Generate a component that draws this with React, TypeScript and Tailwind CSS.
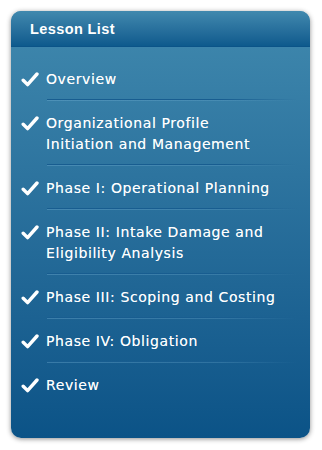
import React from "react";

const items: string[][] = [
  ["Overview"],
  ["Organizational Profile", "Initiation and Management"],
  ["Phase I: Operational Planning"],
  ["Phase II: Intake Damage and", "Eligibility Analysis"],
  ["Phase III: Scoping and Costing"],
  ["Phase IV: Obligation"],
  ["Review"],
];

function Check() {
  return (
    <svg width="18" height="15" viewBox="0 0 18 15" className="shrink-0 mt-[3px]">
      <path
        d="M2.2 8.2 L6.6 12.6 L16 2"
        fill="none"
        stroke="white"
        strokeWidth="3.4"
        strokeLinecap="round"
        strokeLinejoin="round"
      />
    </svg>
  );
}

export default function App() {
  return (
    <div className="w-[322px] h-[450px] bg-white pt-[11px] pl-[11px]">
      <div
        className="w-[299px] h-[427px] rounded-[10px] overflow-hidden shadow-[0_1px_5px_rgba(0,0,0,0.45)] bg-gradient-to-b from-[#4089ae] to-[#0b5387] flex flex-col"
        style={{ fontFamily: '"DejaVu Sans", Verdana, sans-serif' }}
      >
        <div className="h-[36px] shrink-0 bg-gradient-to-b from-[#4189ae] to-[#0d5a8d] flex items-center pl-[19px] pt-[2px] border-b border-[#0b5488]">
          <span
            className="text-white font-bold tracking-[0.4px]"
            style={{ fontFamily: '"Liberation Sans", Arial, sans-serif', fontSize: "14.5px" }}
          >
            Lesson List
          </span>
        </div>
        <div className="flex flex-col pt-[10px]">
          {items.map((lines, i) => (
            <div key={i} className="flex flex-col">
              <div className="flex items-start gap-[7px] pl-[10px] pt-[12px] pb-[9px]">
                <Check />
                <div className="text-white text-[14px] leading-[21px] tracking-[0.6px] [text-shadow:0_0_0.5px_rgba(255,255,255,0.6)]">
                  {lines.map((l, j) => (
                    <div key={j}>{l}</div>
                  ))}
                </div>
              </div>
              {i < items.length - 1 && (
                <div className="ml-[36px] w-[250px] flex flex-col">
                  <div className="h-px bg-gradient-to-r from-[#185d90] via-[#185d90] via-70% to-transparent" />
                  <div className="h-px bg-gradient-to-r from-[rgba(120,180,215,0.35)] via-[rgba(120,180,215,0.25)] via-70% to-transparent" />
                </div>
              )}
            </div>
          ))}
        </div>
      </div>
    </div>
  );
}
